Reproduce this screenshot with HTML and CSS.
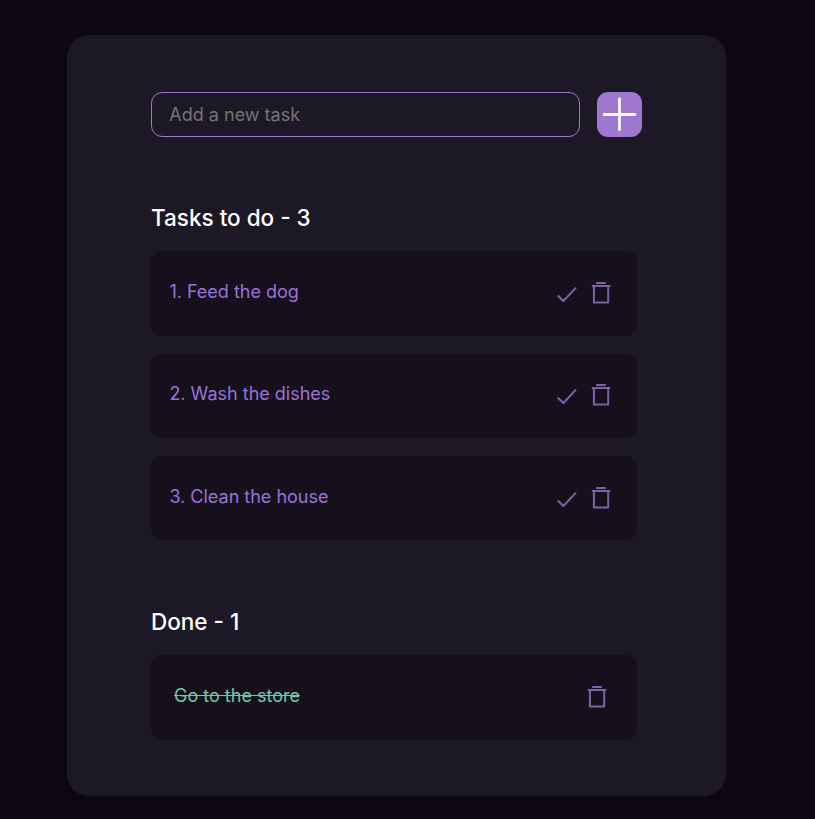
FILE: index.html
```html
<!DOCTYPE html>
<html lang="en">
<head>
<meta charset="utf-8">
<title>Tasks</title>
<link rel="stylesheet" href="styles.css">
</head>
<body>
<svg class="defs" width="0" height="0">
<symbol id="check" viewBox="0 0 24 24"><path d="M2.7 13.5 8.4 19 21 5.6"/></symbol>
<symbol id="trash" viewBox="0 0 24 24"><path d="M2.8 5H21.3M7.2 2H16.8M4.9 5V21.4H19.2V5"/></symbol>
</svg>
<main class="card">
<form class="add">
<input class="field" type="text" placeholder="Add a new task">
<button class="plus" type="button" aria-label="Add"><svg viewBox="0 0 45 45"><path d="M22.5 7V37.7M7.2 22.5H37.8"/></svg></button>
</form>
<h2 class="title">Tasks to do - 3</h2>
<ul class="list">
<li class="task"><span>1. Feed the dog</span><div class="actions"><svg class="icon check"><use href="#check"/></svg><svg class="icon"><use href="#trash"/></svg></div></li>
<li class="task"><span>2. Wash the dishes</span><div class="actions"><svg class="icon check"><use href="#check"/></svg><svg class="icon"><use href="#trash"/></svg></div></li>
<li class="task"><span>3. Clean the house</span><div class="actions"><svg class="icon check"><use href="#check"/></svg><svg class="icon"><use href="#trash"/></svg></div></li>
</ul>
<h2 class="title done-title">Done - 1</h2>
<ul class="list">
<li class="task done"><span>Go to the store</span><div class="actions"><svg class="icon"><use href="#trash"/></svg></div></li>
</ul>
</main>
</body>
</html>
```
FILE: styles.css
```css
* { box-sizing: border-box; }
body { margin: 0; background: #0d0714; font-family: Inter, sans-serif; overflow: hidden; }
.defs { display: block; }
.card { width: 659px; height: 761px; margin: 35px 0 0 67px; padding: 57px 84px 0; border-radius: 22px; background: #1d1825; }
.add { display: flex; gap: 17px; }
.field { width: 429px; height: 45px; padding: 0 17.3px; border: 1px solid #9e78cf; border-radius: 11px; background: transparent; color: #fff; font: 18px Inter, sans-serif; }
.field::placeholder { color: #757575; }
.plus { width: 45px; height: 45px; padding: 0; border: 0; border-radius: 11px; background: #9e78cf; }
.plus svg { display: block; width: 45px; height: 45px; fill: none; stroke: #fff; stroke-width: 2.8; stroke-linecap: round; }
.title { margin: 67px 0 19.15px; color: #fff; font-size: 22.5px; font-weight: 500; line-height: 28px; }
.done-title { margin-top: 67.8px; }
.list { display: grid; gap: 18px; width: 486px; margin: 0; padding: 0; list-style: none; }
.task { display: flex; justify-content: space-between; height: 84.4px; padding: 29.9px 24px 0 18.4px; border-radius: 11px; background: #15101c; color: #9b72da; font-size: 18px; line-height: 22px; }
.actions { display: flex; gap: 10px; }
.icon { width: 24px; height: 24px; fill: none; stroke: #9e78cf; stroke-width: 2; stroke-linejoin: round; opacity: .78; }
.check { margin-top: 1px; }
.done { height: 85px; padding-left: 23px; padding-right: 28px; color: #6ecaa8; }
.done span { text-decoration: line-through; }
```
